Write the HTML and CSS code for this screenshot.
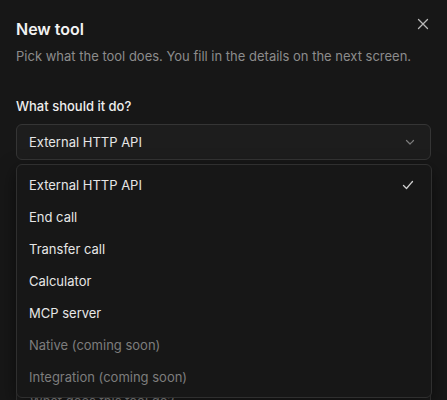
FILE: index.html
```html
<!DOCTYPE html>
<html lang="en">
<head>
    <meta charset="UTF-8">
    <meta name="viewport" content="width=device-width, initial-scale=1.0">
    <title>New tool</title>
    <link rel="stylesheet" href="styles.css">
</head>
<body>

<div class="dialog">
    <div class="dialog-head">
        <h2 class="dialog-title">New tool</h2>
        <span class="close-btn">
            <svg width="12" height="12" viewBox="0 0 12 12" fill="none" stroke="currentColor" stroke-width="1.3" stroke-linecap="round">
                <path d="M1.5 1.5 L10.5 10.5 M10.5 1.5 L1.5 10.5"/>
            </svg>
        </span>
    </div>
    <p class="dialog-desc">Pick what the tool does. You fill in the details on the next screen.</p>

    <div class="field">
        <label class="field-label">What should it do?</label>
        <div class="select-wrap">
            <div class="select-trigger">
                <span>External HTTP API</span>
                <svg width="12" height="12" viewBox="0 0 12 12" fill="none" stroke="currentColor" stroke-width="1.2" stroke-linecap="round" stroke-linejoin="round">
                    <path d="M2.5 4.5 L6 8 L9.5 4.5"/>
                </svg>
            </div>

            <!-- open dropdown, floats over the rest of the form -->
            <ul class="select-menu">
                <li class="option selected">
                    <span>External HTTP API</span>
                    <svg width="14" height="14" viewBox="0 0 14 14" fill="none" stroke="currentColor" stroke-width="1.3" stroke-linecap="round" stroke-linejoin="round">
                        <path d="M2.5 7.5 L5.5 10.5 L11.5 3.5"/>
                    </svg>
                </li>
                <li class="option">End call</li>
                <li class="option">Transfer call</li>
                <li class="option">Calculator</li>
                <li class="option">MCP server</li>
                <li class="option disabled">Native (coming soon)</li>
                <li class="option disabled">Integration (coming soon)</li>
            </ul>
        </div>
    </div>

    <div class="field">
        <input class="text-input" type="text">
    </div>
    <div class="field">
        <input class="text-input" type="text">
    </div>
    <div class="field">
        <input class="text-input" type="text">
    </div>
    <div class="field">
        <textarea class="text-area" placeholder="What does this tool do?"></textarea>
    </div>
</div>

</body>
</html>
```

FILE: styles.css
```css
body {
    margin: 0;
    height: 100vh;
    overflow: hidden;
    background-color: #171717;
    font-family: 'Inter', 'Noto Sans', sans-serif;
    color: #ececec;
}

.dialog {
    padding: 16px 16px 0 16px;
}

.dialog-head {
    display: flex;
    justify-content: space-between;
    align-items: flex-start;
}
.dialog-title {
    margin: 3px 0 0 0;
    font-size: 16px;
    font-weight: 600;
    line-height: 20px;
    color: #f2f2f2;
}
.close-btn {
    display: flex;
    margin-top: 2px;
    margin-right: 2px;
    color: #b8b8b8;
    cursor: pointer;
}
.dialog-desc {
    margin: 7px 0 0 0;
    font-size: 13px;
    line-height: 20px;
    color: #8c8c8c;
}

/* Form fields */
.field {
    margin-top: 30px;
}
.field + .field {
    margin-top: 28px;
}
.field-label {
    display: block;
    font-size: 13px;
    font-weight: 500;
    line-height: 20px;
    margin-bottom: 8px;
    color: #eeeeee;
}

.select-wrap {
    position: relative;
}
.select-trigger {
    height: 34px;
    display: flex;
    align-items: center;
    justify-content: space-between;
    padding: 0 14px 0 12px;
    background-color: #1d1d1d;
    border: 1px solid #353535;
    border-radius: 6px;
    font-size: 13px;
    color: #e6e6e6;
}
.select-trigger svg {
    color: #7c7c7c;
}

.select-menu {
    position: absolute;
    top: 40px;
    left: 0;
    right: -1px;
    z-index: 10;
    list-style: none;
    margin: 0;
    padding: 4px;
    background-color: #171717;
    border: 1px solid #2f2f2f;
    border-radius: 6px;
    box-shadow: 0 6px 18px rgba(0, 0, 0, 0.5);
}
.option {
    height: 32px;
    display: flex;
    align-items: center;
    justify-content: space-between;
    padding: 0 12px 0 8px;
    font-size: 13px;
    color: #e6e6e6;
    border-radius: 4px;
}
.option.selected svg {
    color: #cfcfcf;
}
.option.disabled {
    color: #7d7d7d;
}

/* Fields hidden behind the open menu */
.text-input,
.text-area {
    display: block;
    width: 100%;
    box-sizing: border-box;
    background-color: #1d1d1d;
    border: 1px solid #353535;
    border-radius: 6px;
    font-family: inherit;
    font-size: 13px;
    color: #e6e6e6;
}
.text-input {
    height: 36px;
    padding: 0 12px;
}
.text-area {
    height: 80px;
    padding: 10px 13px;
    line-height: 20px;
    resize: none;
}
.text-area::placeholder {
    color: #9a9a9a;
}
```
